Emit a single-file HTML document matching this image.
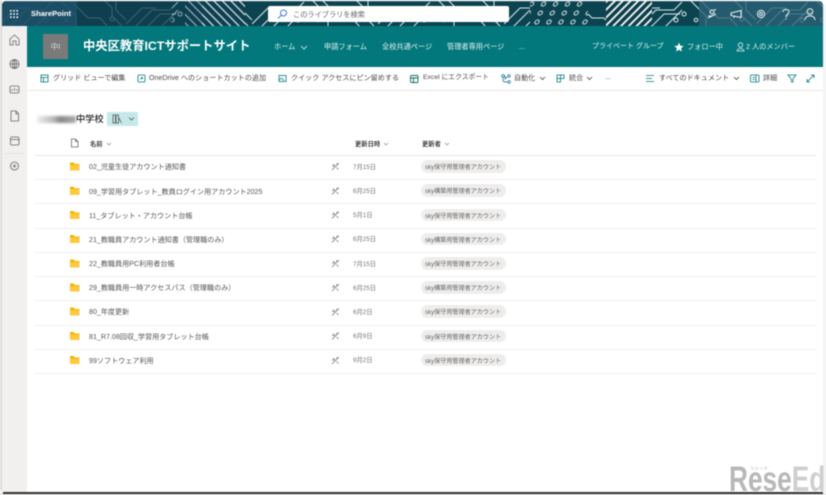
<!DOCTYPE html>
<html lang="ja"><head><meta charset="utf-8"><title>SharePoint</title>
<style>
*{box-sizing:border-box;margin:0;padding:0}
html,body{width:826px;height:495px;overflow:hidden;background:#fff}
body{font-family:"Liberation Sans","Noto Sans CJK JP",sans-serif;position:relative}
#w{position:absolute;inset:0;filter:blur(.4px)}
.a{position:absolute;white-space:nowrap;line-height:1}
.nav{color:#e4f1f1;font-size:7.2px;top:43px}
.cmd{color:#4a4a4a;font-size:7.1px;top:75px}
.row{position:absolute;left:35px;width:781px;height:1px;background:#f0efee}
.name{left:89px;font-size:7.1px;color:#555;margin-top:1px}
.date{left:353px;font-size:6.3px;color:#777;margin-top:1.300px}
.pill{left:421px;width:85px;height:12.500px;border-radius:7px;background:#eeedec;color:#666;font-size:6.100px;line-height:15.500px;padding-left:4px}
svg{position:absolute;overflow:visible}
.ic{fill:none;stroke:#03787c;stroke-width:.8}
.gr{fill:none;stroke:#666;stroke-width:.8}
.hd{font-size:6.300px;font-weight:bold;color:#444;top:141.500px}
</style></head><body><div id="w">

<!-- banner -->
<svg style="left:0;top:0" width="826" height="27" viewBox="0 0 826 27">
<defs>
<pattern id="p" width="126" height="27" patternUnits="userSpaceOnUse">
<rect width="126" height="27" fill="#0b4450"/>
<g fill="none" stroke="#dfe9eb" stroke-width="1">
<path d="M0 24L16 8H30M8 28L26 10H44L52 2M20 28L34 14H50M34 28L52 10"/>
<path d="M60 0L76 16V28M70 0L88 18H100L108 27"/>
<path d="M104 0L112 8V16L122 26M116 0V10L126 20"/>
<circle cx="54" cy="14" r="2"/><circle cx="46" cy="20" r="2"/><circle cx="112" cy="19" r="2"/><circle cx="66" cy="20" r="1.800"/>
</g>
</pattern>
<pattern id="dots" width="12" height="9" patternUnits="userSpaceOnUse" patternTransform="skewX(-20)">
<circle cx="5" cy="4" r="2" fill="none" stroke="#e4ecee" stroke-width="1"/>
</pattern>
<pattern id="hatch" width="5.500" height="5.500" patternUnits="userSpaceOnUse" patternTransform="rotate(45)">
<rect width="5.500" height="5.500" fill="#0b3d48"/><rect width="2" height="5.500" fill="#e4ecee"/>
</pattern>
<pattern id="hatch2" width="6" height="6" patternUnits="userSpaceOnUse" patternTransform="rotate(-45)">
<rect width="6" height="6" fill="#0d3f50"/><rect width="1.300" height="6" fill="#d0dce0"/>
</pattern>
</defs>
<rect width="826" height="27" fill="url(#p)"/>
<rect x="530" y="0" width="58" height="27" fill="#0b4450"/>
<rect x="530" y="0" width="58" height="27" fill="url(#dots)"/>
<rect x="606" y="0" width="46" height="27" fill="url(#hatch)"/>
<rect x="185" y="0" width="60" height="27" fill="url(#hatch2)"/>
<rect x="0" y="0" width="77" height="27" fill="#1c4f66" opacity=".95"/>
<rect x="77" y="0" width="95" height="27" fill="#0f3d50" opacity=".78"/>
<rect x="172" y="0" width="30" height="27" fill="#0f3d50" opacity=".35"/>
<rect x="699" y="0" width="127" height="27" fill="#2a6276" opacity=".8"/>
<path d="M0 0H7Q1.500 1.500 1.500 7V7H0Z" fill="#fff"/>
<rect x="0" y="0" width="826" height="1.200" fill="#f2f2f2"/>
<path d="M826 0H818Q823 1.500 823 6H826Z" fill="#fff"/>
</svg>
<div class="a" style="left:31px;top:10px;color:#fff;font-size:7.600px;font-weight:bold">SharePoint</div>
<svg style="left:10px;top:10px" width="9" height="9" fill="#fff"><rect width="1.600" height="1.600"/><rect x="3.200" width="1.600" height="1.600"/><rect x="6.400" width="1.600" height="1.600"/><rect y="3.200" width="1.600" height="1.600"/><rect x="3.200" y="3.200" width="1.600" height="1.600"/><rect x="6.400" y="3.200" width="1.600" height="1.600"/><rect y="6.400" width="1.600" height="1.600"/><rect x="3.200" y="6.400" width="1.600" height="1.600"/><rect x="6.400" y="6.400" width="1.600" height="1.600"/></svg>

<div class="a" style="left:268px;top:6px;width:241px;height:16px;background:#fff;border-radius:2px"></div>
<svg style="left:277px;top:9px" width="11" height="11" fill="none" stroke="#3a7fd0" stroke-width="1"><circle cx="6.500" cy="4" r="3"/><path d="M4.300 6.200L1 9.500"/></svg>
<div class="a" style="left:293px;top:11px;font-size:7.200px;color:#666">このライブラリを検索</div>

<svg style="left:706px;top:7px" width="112" height="14" fill="none" stroke="#eef4f5" stroke-width="1">
<circle cx="6" cy="5" r="2"/><path d="M2 11L10 7M8 3L10 2.500M6 9H2"/>
<path d="M25 6L35 3.500V10.500L25 8.500ZM28 9V11"/>
<circle cx="55" cy="7" r="3.600"/><circle cx="55" cy="7" r="1.500"/>
<path d="M77 5C77 1.500 83 1.500 83 5C83 7 80 7 80 10M80 11.500V12.500"/>
<circle cx="104" cy="4.500" r="2.800"/><path d="M99 13C99 7.500 109 7.500 109 13"/>
</svg>

<!-- left rail -->
<div class="a" style="left:0;top:26px;width:27px;height:469px;background:#f1f0ee"></div>
<svg style="left:8px;top:33px" width="13" height="145" fill="none" stroke="#666" stroke-width=".8">
<path d="M2 6L6.500 2L11 6V12H8V8H5V12H2Z"/>
<circle cx="6.500" cy="31" r="4.500"/><path d="M2 31H11M6.500 26.500V35.500M4.500 31C4.500 28 5.500 27 6.500 26.500C7.500 27 8.500 28 8.500 31C8.500 34 7.500 35 6.500 35.500C5.500 35 4.500 34 4.500 31"/>
<rect x="2" y="53" width="9" height="7" rx="1.500"/><path d="M4 58V56M6.500 58V55M9 58V56"/>
<path d="M3 78H8L10.500 80.500V88H3ZM8 78V81H10.500"/>
<rect x="2.500" y="104" width="8.500" height="8" rx="1.500"/><path d="M2.500 106.500H11"/>
<circle cx="6.500" cy="133" r="4"/><path d="M4.500 133H8.500M6.500 131V135"/>
</svg>
<div class="a" style="left:4px;top:153px;width:20px;height:1px;background:#e4e3e1"></div>

<!-- site header -->
<div class="a" style="left:27px;top:26px;width:796px;height:41px;background:#03787c"></div>
<div class="a" style="left:43px;top:34px;width:25px;height:25px;background:#7a7a7a;color:#ddd;font-size:7.500px;line-height:25px;text-align:center">中I</div>
<div class="a" style="left:83px;top:39.500px;color:#fff;font-size:12.300px;font-weight:bold">中央区教育ICTサポートサイト</div>
<div class="a nav" style="left:274px">ホーム</div>
<svg style="left:300px;top:45px" width="8" height="5" fill="none" stroke="#e4f1f1" stroke-width=".8"><path d="M1 1L4 4L7 1"/></svg>
<div class="a nav" style="left:324px">申請フォーム</div>
<div class="a nav" style="left:382px">全校共通ページ</div>
<div class="a nav" style="left:447px">管理者専用ページ</div>
<div class="a nav" style="left:519px">...</div>
<div class="a nav" style="left:592px;font-size:7px">プライベート グループ</div>
<svg style="left:674px;top:42px" width="10" height="10" fill="#fff"><path d="M5 .5L6.300 3.700L9.700 4L7.100 6.200L7.900 9.500L5 7.700L2.100 9.500L2.900 6.200L.300 4L3.700 3.700Z"/></svg>
<div class="a nav" style="left:687px">フォロー中</div>
<svg style="left:736px;top:42px" width="9" height="10" fill="none" stroke="#e4f1f1" stroke-width=".8"><circle cx="4.500" cy="3" r="2.200"/><path d="M1 9C1 5.800 8 5.800 8 9Z"/></svg>
<div class="a nav" style="left:746px">2 人のメンバー</div>

<!-- command bar -->
<div class="a" style="left:27px;top:90px;width:796px;height:1px;background:#e8e7e6"></div>
<svg style="left:40px;top:74px" width="9" height="9" class="ic"><rect x="1" y="1" width="7" height="7"/><path d="M1 3.500H8M3.500 3.500V8"/></svg>
<div class="a cmd" style="left:53px">グリッド ビューで編集</div>
<svg style="left:137px;top:74px" width="9" height="9" class="ic"><rect x="1" y="1" width="7" height="7" rx="1"/><path d="M3.500 5.500L5.500 3.500M4 3.500H5.500V5"/></svg>
<div class="a cmd" style="left:149px">OneDrive へのショートカットの追加</div>
<svg style="left:278px;top:74px" width="9" height="9" class="ic"><rect x="1" y="1.500" width="7" height="6"/><path d="M1 6L3.500 4L6 6.500"/></svg>
<div class="a cmd" style="left:291px">クイック アクセスにピン留めする</div>
<svg style="left:410px;top:74px" width="9" height="9" fill="none" stroke="#0f6a62" stroke-width=".9"><rect x=".5" y="1.500" width="7.500" height="7" rx="1"/><path d="M.5 4H8M3.500 4V8.500"/></svg>
<div class="a cmd" style="left:423px;font-size:6.800px">Excel にエクスポート</div>
<svg style="left:501px;top:74px" width="10" height="10" fill="none" stroke="#2a7f9e" stroke-width=".8"><circle cx="2" cy="2" r="1.300"/><circle cx="8" cy="8" r="1.300"/><circle cx="8" cy="2" r="1.300"/><path d="M2 3.500V6.500C2 8 4 8 6.500 8M4 1.500V5L6.500 2.500"/></svg>
<div class="a cmd" style="left:514px">自動化</div>
<svg style="left:539px;top:76px" width="7" height="5" fill="none" stroke="#444" stroke-width=".8"><path d="M1 1L3.500 3.500L6 1"/></svg>
<svg style="left:556px;top:74px" width="9" height="9" class="ic"><path d="M1 1H8V4.500H4.500V8H1ZM4.500 1V4.500H1"/></svg>
<div class="a cmd" style="left:569px">統合</div>
<svg style="left:586px;top:76px" width="7" height="5" fill="none" stroke="#444" stroke-width=".8"><path d="M1 1L3.500 3.500L6 1"/></svg>
<div class="a cmd" style="left:605px;top:74px;color:#03787c">...</div>
<svg style="left:646px;top:74px" width="9" height="9" class="ic"><path d="M0 1.500H8M0 4.500H6M0 7.500H8"/></svg>
<div class="a cmd" style="left:659px">すべてのドキュメント</div>
<svg style="left:733px;top:76px" width="7" height="5" fill="none" stroke="#444" stroke-width=".8"><path d="M1 1L3.500 3.500L6 1"/></svg>
<svg style="left:750px;top:74px" width="10" height="9" class="ic"><rect x=".5" y="1" width="8.500" height="7" rx="1"/><path d="M2.500 3.500H5M2.500 5.500H5M6 1V8"/></svg>
<div class="a cmd" style="left:763px">詳細</div>
<svg style="left:787px;top:74px" width="10" height="9" class="ic"><path d="M1 1H9L6 4.500V8H4.500L4 4.500Z"/></svg>
<svg style="left:806px;top:74px" width="9" height="9" class="ic"><path d="M1 8L8 1M5 1H8V4M1 5V8H4"/></svg>

<!-- title -->
<div class="a" style="left:37px;top:115.500px;width:39px;height:7px;background:linear-gradient(90deg,#eee,#bbb 40%,#888 60%,#aaa);filter:blur(1.200px)"></div>
<div class="a" style="left:76px;top:114.500px;font-size:9.200px;color:#222;font-weight:500">中学校</div>
<div class="a" style="left:107px;top:112px;width:31px;height:14px;background:#c5e9ea"></div>
<svg style="left:112px;top:114px" width="24" height="10" fill="none" stroke="#555" stroke-width=".8"><path d="M1 1H3.500V9H1ZM4 1H6.500V9H4ZM7 4L9.500 9M22 3.500L19.500 6L17 3.500" /></svg>

<!-- list header -->
<svg style="left:70px;top:138px" width="9" height="10" class="gr"><path d="M1.500 1H5.500L8 3.500V9H1.500ZM5.500 1V3.500H8"/></svg>
<div class="a hd" style="left:90px">名前</div>
<svg style="left:105.500px;top:142px" width="6" height="4" fill="none" stroke="#888" stroke-width=".7"><path d="M1 1L3 3L5 1"/></svg>
<div class="a hd" style="left:355px">更新日時</div>
<svg style="left:383px;top:142px" width="6" height="4" fill="none" stroke="#888" stroke-width=".7"><path d="M1 1L3 3L5 1"/></svg>
<div class="a hd" style="left:422px">更新者</div>
<svg style="left:444px;top:142px" width="6" height="4" fill="none" stroke="#888" stroke-width=".7"><path d="M1 1L3 3L5 1"/></svg>
<div class="row" style="top:154.500px;height:1.500px;background:#eaeaea"></div>

<!-- rows -->
<svg style="left:0;top:0" width="826" height="495">
<defs>
<g id="f"><path d="M0 0H3.500L5 1.500H9.500V8H0Z" fill="#f5b300"/><path d="M0 2.500H9.500V8H0Z" fill="#ffc83d"/></g>
<g id="x" fill="none" stroke="#777" stroke-width=".8"><path d="M0 7L7 0M1 1L3 3M4.500 4.500L6.500 6.500M0 3H2.500M5 0V2"/></g>
</defs>
<use href="#f" x="70" y="162.500"/><use href="#f" x="70" y="186.700"/><use href="#f" x="70" y="211"/><use href="#f" x="70" y="235"/><use href="#f" x="70" y="259.500"/><use href="#f" x="70" y="283.500"/><use href="#f" x="70" y="307.500"/><use href="#f" x="70" y="332"/><use href="#f" x="70" y="356"/>
<use href="#x" x="332" y="163"/><use href="#x" x="332" y="187.500"/><use href="#x" x="332" y="211.500"/><use href="#x" x="332" y="235.500"/><use href="#x" x="332" y="260"/><use href="#x" x="332" y="284"/><use href="#x" x="332" y="308.500"/><use href="#x" x="332" y="332.500"/><use href="#x" x="332" y="357"/>
</svg>

<div class="a name" style="top:163.300px">02_児童生徒アカウント通知書</div><div class="a date" style="top:163.700px">7月15日</div><div class="a pill" style="top:160px">sky保守用管理者アカウント</div><div class="row" style="top:179px"></div>
<div class="a name" style="top:187.500px">09_学習用タブレット_教員ログイン用アカウント2025</div><div class="a date" style="top:187.900px">6月25日</div><div class="a pill" style="top:184.300px">sky構築用管理者アカウント</div><div class="row" style="top:203px"></div>
<div class="a name" style="top:211.700px">11_タブレット・アカウント台帳</div><div class="a date" style="top:212px">5月1日</div><div class="a pill" style="top:208.500px">sky保守用管理者アカウント</div><div class="row" style="top:227.500px"></div>
<div class="a name" style="top:235.800px">21_教職員アカウント通知書（管理職のみ）</div><div class="a date" style="top:236.200px">6月25日</div><div class="a pill" style="top:232.700px">sky構築用管理者アカウント</div><div class="row" style="top:251.500px"></div>
<div class="a name" style="top:260px">22_教職員用PC利用者台帳</div><div class="a date" style="top:260.400px">7月15日</div><div class="a pill" style="top:257px">sky保守用管理者アカウント</div><div class="row" style="top:276px"></div>
<div class="a name" style="top:284.200px">29_教職員用一時アクセスパス（管理職のみ）</div><div class="a date" style="top:284.600px">6月25日</div><div class="a pill" style="top:281px">sky構築用管理者アカウント</div><div class="row" style="top:300px"></div>
<div class="a name" style="top:308.400px">80_年度更新</div><div class="a date" style="top:308.800px">6月2日</div><div class="a pill" style="top:305px">sky保守用管理者アカウント</div><div class="row" style="top:324.500px"></div>
<div class="a name" style="top:332.600px">81_R7.08回収_学習用タブレット台帳</div><div class="a date" style="top:333px">6月9日</div><div class="a pill" style="top:329.500px">sky保守用管理者アカウント</div><div class="row" style="top:348.500px"></div>
<div class="a name" style="top:356.800px">99ソフトウェア利用</div><div class="a date" style="top:357.200px">9月2日</div><div class="a pill" style="top:353.700px">sky保守用管理者アカウント</div><div class="row" style="top:373px"></div>

<!-- window edges -->
<div class="a" style="left:823px;top:4px;width:3px;height:491px;background:#f4f4f4"></div>
<div class="a" style="left:0;top:0;width:1.500px;height:490px;background:#ddd"></div>
<div class="a" style="left:3px;top:492px;width:820px;height:1.500px;background:#333"></div>
<div class="a" style="left:0;top:493.500px;width:826px;height:2px;background:#e4e4e4"></div>

<!-- watermark -->
<div class="a" style="left:729px;top:461.500px;font-size:35px;font-weight:bold;color:#b8b8b8;transform:scaleX(.75);transform-origin:left top">Rese<span style="color:#cfcfcf">Ed</span></div>
<div class="a" style="left:750px;top:467px;font-size:4.500px;color:#aaa">リシード</div>
</div></body></html>
